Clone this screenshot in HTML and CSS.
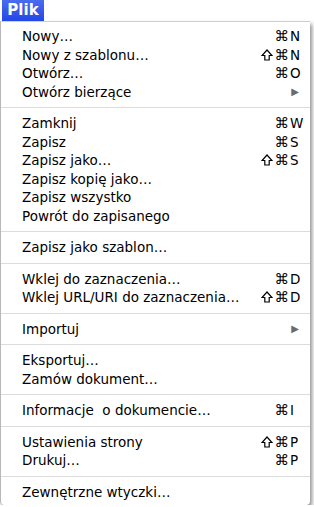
FILE: index.html
```html
<!DOCTYPE html>
<html lang="pl">
<head>
  <meta charset="UTF-8" />
  <title>Plik</title>
  <link rel="stylesheet" href="styles.css">
</head>
<body>
  <div class="menubar">
    <span class="menu-title">Plik</span>
  </div>
  <div class="menu">
    <div class="item"><span class="label">Nowy…</span><span class="keys"><span class="mods">⌘</span><span class="key">N</span></span></div>
    <div class="item"><span class="label">Nowy z szablonu…</span><span class="keys"><svg class="shift" viewBox="0 0 12 12"><path d="M6 1 L11 6.5 H8.2 V11 H3.8 V6.5 H1 Z"/></svg><span class="mods">⌘</span><span class="key">N</span></span></div>
    <div class="item"><span class="label">Otwórz…</span><span class="keys"><span class="mods">⌘</span><span class="key">O</span></span></div>
    <div class="item"><span class="label">Otwórz bierzące</span><span class="arrow">▶</span></div>
    <div class="sep"></div>
    <div class="item"><span class="label">Zamknij</span><span class="keys"><span class="mods">⌘</span><span class="key">W</span></span></div>
    <div class="item"><span class="label">Zapisz</span><span class="keys"><span class="mods">⌘</span><span class="key">S</span></span></div>
    <div class="item"><span class="label">Zapisz jako…</span><span class="keys"><svg class="shift" viewBox="0 0 12 12"><path d="M6 1 L11 6.5 H8.2 V11 H3.8 V6.5 H1 Z"/></svg><span class="mods">⌘</span><span class="key">S</span></span></div>
    <div class="item"><span class="label">Zapisz kopię jako…</span></div>
    <div class="item"><span class="label">Zapisz wszystko</span></div>
    <div class="item"><span class="label">Powrót do zapisanego</span></div>
    <div class="sep"></div>
    <div class="item"><span class="label">Zapisz jako szablon…</span></div>
    <div class="sep"></div>
    <div class="item"><span class="label">Wklej do zaznaczenia…</span><span class="keys"><span class="mods">⌘</span><span class="key">D</span></span></div>
    <div class="item"><span class="label">Wklej URL/URI do zaznaczenia…</span><span class="keys"><svg class="shift" viewBox="0 0 12 12"><path d="M6 1 L11 6.5 H8.2 V11 H3.8 V6.5 H1 Z"/></svg><span class="mods">⌘</span><span class="key">D</span></span></div>
    <div class="sep"></div>
    <div class="item"><span class="label">Importuj</span><span class="arrow">▶</span></div>
    <div class="sep"></div>
    <div class="item"><span class="label">Eksportuj…</span></div>
    <div class="item"><span class="label">Zamów dokument…</span></div>
    <div class="sep"></div>
    <div class="item"><span class="label">Informacje&nbsp; o dokumencie…</span><span class="keys"><span class="mods">⌘</span><span class="key">I</span></span></div>
    <div class="sep"></div>
    <div class="item"><span class="label">Ustawienia strony</span><span class="keys"><svg class="shift" viewBox="0 0 12 12"><path d="M6 1 L11 6.5 H8.2 V11 H3.8 V6.5 H1 Z"/></svg><span class="mods">⌘</span><span class="key">P</span></span></div>
    <div class="item"><span class="label">Drukuj…</span><span class="keys"><span class="mods">⌘</span><span class="key">P</span></span></div>
    <div class="sep"></div>
    <div class="item"><span class="label">Zewnętrzne wtyczki…</span></div>
  </div>
</body>
</html>
```

FILE: styles.css
```css
body {
  margin: 0;
  background: #fff;
  font-family: "DejaVu Sans", sans-serif;
  font-size: 13.5px;
  color: #000;
}
.menubar {
  height: 21px;
  display: flex;
}
.menu-title {
  margin-left: 2px;
  width: 42px;
  height: 21px;
  line-height: 21px;
  text-align: center;
  color: #fff;
  font-weight: bold;
  font-size: 15px;
  background: linear-gradient(#4a6cf0, #2447e6);
}
.menu {
  width: 309px;
  padding: 5px 0 4px;
  background: #fff;
  border-left: 1px solid #b8b8b8;
  border-top: 1px solid #d0d0d0;
  border-bottom-left-radius: 4px;
  border-bottom-right-radius: 4px;
  box-shadow: 2px 3px 4px rgba(0, 0, 0, 0.45);
}
.item {
  display: flex;
  align-items: center;
  justify-content: space-between;
  height: 18.5px;
  padding: 0 8px 0 21px;
  white-space: nowrap;
}
.keys {
  display: flex;
  align-items: center;
}
.mods {
  font-size: 14.5px;
}
.shift {
  width: 12px;
  height: 12px;
  margin-right: 2px;
  fill: none;
  stroke: #000;
  stroke-width: 1.2;
  stroke-linejoin: miter;
}
.key {
  width: 12px;
  margin-left: 1px;
}
.arrow {
  font-size: 10px;
  color: #6b6b6b;
  margin-right: 3px;
}
.sep {
  height: 1px;
  margin: 6px 0;
  background: #dcdcdc;
}
```
